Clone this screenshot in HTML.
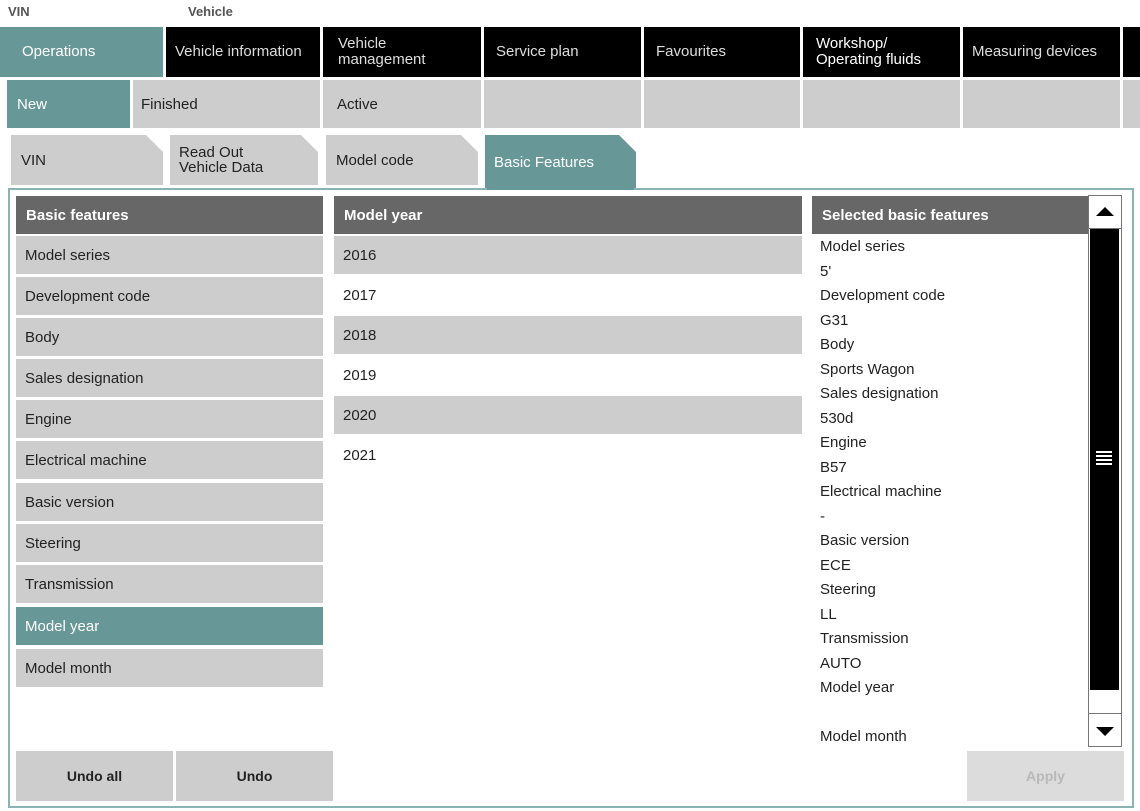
<!DOCTYPE html>
<html><head><style>
*{margin:0;padding:0;box-sizing:border-box}
body{width:1140px;height:811px;background:#fff;font-family:"Liberation Sans",Arial,sans-serif;font-size:15px;color:#222;position:relative;overflow:hidden}
.a{position:absolute}
.lbl{font-weight:bold;font-size:13px;color:#555}
.nav{background:#000;color:#ddd;display:flex;align-items:center;padding-left:9px;line-height:16px}
.sub{background:#cdcdcd;color:#222;display:flex;align-items:center;padding-left:10px}
.teal{background:#679797;color:#fff}
.tab{background:#cdcdcd;display:flex;align-items:center;padding-left:10px;line-height:15px;clip-path:polygon(0 0,calc(100% - 17px) 0,100% 17px,100% 100%,0 100%)}
.tab.teal{background:#679797;color:#fff}
.hd{background:#676767;color:#fff;font-weight:bold;display:flex;align-items:center;padding-left:10px}
.row{display:flex;align-items:center;padding-left:9px}
.g{background:#cdcdcd}
.sel{position:absolute;left:820px;line-height:24.5px}
.btn{background:#cdcdcd;font-weight:bold;font-size:14px;display:flex;align-items:center;justify-content:center}
</style></head><body>
<div class="a lbl" style="left:8px;top:4px">VIN</div>
<div class="a lbl" style="left:188px;top:4px">Vehicle</div>

<div class="a nav teal" style="left:0;top:27px;width:163px;height:50px;padding-left:22px;color:#fff">Operations</div>
<div class="a nav" style="left:166px;top:27px;width:154px;height:50px">Vehicle information</div>
<div class="a nav" style="left:323px;top:27px;width:158px;height:50px;padding-left:15px">Vehicle<br>management</div>
<div class="a nav" style="left:484px;top:27px;width:157px;height:50px;padding-left:12px">Service plan</div>
<div class="a nav" style="left:644px;top:27px;width:156px;height:50px;padding-left:12px">Favourites</div>
<div class="a nav" style="left:803px;top:27px;width:157px;height:50px;padding-left:13px;color:#fff">Workshop/<br>Operating fluids</div>
<div class="a nav" style="left:963px;top:27px;width:157px;height:50px;padding-left:9px">Measuring devices</div>
<div class="a nav" style="left:1123px;top:27px;width:17px;height:50px"></div>

<div class="a sub teal" style="left:7px;top:80px;width:123px;height:48px;color:#fff">New</div>
<div class="a sub" style="left:133px;top:80px;width:187px;height:48px;padding-left:8px">Finished</div>
<div class="a sub" style="left:323px;top:80px;width:158px;height:48px;padding-left:14px">Active</div>
<div class="a sub" style="left:484px;top:80px;width:157px;height:48px"></div>
<div class="a sub" style="left:644px;top:80px;width:156px;height:48px"></div>
<div class="a sub" style="left:803px;top:80px;width:157px;height:48px"></div>
<div class="a sub" style="left:963px;top:80px;width:157px;height:48px"></div>
<div class="a sub" style="left:1123px;top:80px;width:17px;height:48px"></div>

<div class="a tab" style="left:11px;top:135px;width:152px;height:50px">VIN</div>
<div class="a tab" style="left:170px;top:135px;width:148px;height:50px;padding-left:9px">Read Out<br>Vehicle Data</div>
<div class="a tab" style="left:326px;top:135px;width:152px;height:50px;padding-left:10px">Model code</div>
<div class="a tab teal" style="left:485px;top:135px;width:151px;height:54px;padding-left:9px">Basic Features</div>

<div class="a" style="left:8px;top:188px;width:1126px;height:620px;border:2px solid #8ab3b3"></div>
<div class="a" style="left:487px;top:188px;width:147px;height:2px;background:#679797"></div>

<div class="a hd" style="left:16px;top:196px;width:307px;height:38px">Basic features</div>
<div class="a row g" style="left:16px;top:236px;width:307px;height:38px">Model series</div>
<div class="a row g" style="left:16px;top:277px;width:307px;height:38px">Development code</div>
<div class="a row g" style="left:16px;top:318px;width:307px;height:38px">Body</div>
<div class="a row g" style="left:16px;top:359px;width:307px;height:38px">Sales designation</div>
<div class="a row g" style="left:16px;top:400px;width:307px;height:38px">Engine</div>
<div class="a row g" style="left:16px;top:441px;width:307px;height:38px">Electrical machine</div>
<div class="a row g" style="left:16px;top:483px;width:307px;height:38px">Basic version</div>
<div class="a row g" style="left:16px;top:524px;width:307px;height:38px">Steering</div>
<div class="a row g" style="left:16px;top:565px;width:307px;height:38px">Transmission</div>
<div class="a row teal" style="left:16px;top:607px;width:307px;height:38px">Model year</div>
<div class="a row g" style="left:16px;top:649px;width:307px;height:38px">Model month</div>

<div class="a hd" style="left:334px;top:196px;width:468px;height:38px">Model year</div>
<div class="a row g" style="left:334px;top:236px;width:468px;height:38px">2016</div>
<div class="a row" style="left:334px;top:276px;width:468px;height:38px">2017</div>
<div class="a row g" style="left:334px;top:316px;width:468px;height:38px">2018</div>
<div class="a row" style="left:334px;top:356px;width:468px;height:38px">2019</div>
<div class="a row g" style="left:334px;top:396px;width:468px;height:38px">2020</div>
<div class="a row" style="left:334px;top:436px;width:468px;height:38px">2021</div>

<div class="a hd" style="left:812px;top:196px;width:276px;height:38px">Selected basic features</div>
<div class="sel" style="top:235px">Model series<br>5'<br>Development code<br>G31<br>Body<br>Sports Wagon<br>Sales designation<br>530d<br>Engine<br>B57<br>Electrical machine<br>-<br>Basic version<br>ECE<br>Steering<br>LL<br>Transmission<br>AUTO<br>Model year<br><br>Model month</div>

<div class="a" style="left:1088px;top:195px;width:34px;height:552px;border:1px solid #777;background:#fff"></div>
<div class="a" style="left:1089px;top:228px;width:32px;height:1px;background:#777"></div>
<div class="a" style="left:1090px;top:229px;width:29px;height:461px;background:#000"></div>
<div class="a" style="left:1089px;top:713px;width:32px;height:1px;background:#777"></div>
<svg class="a" style="left:1094px;top:204px" width="22" height="14"><polygon points="2,12 11,3 20,12" fill="#000"/></svg>
<svg class="a" style="left:1094px;top:724px" width="22" height="14"><polygon points="2,3 11,12 20,3" fill="#000"/></svg>
<div class="a" style="left:1096px;top:451px;width:16px;height:2px;background:#fff;box-shadow:0 4px 0 #fff,0 8px 0 #fff,0 12px 0 #fff"></div>

<div class="a btn" style="left:16px;top:751px;width:157px;height:50px">Undo all</div>
<div class="a btn" style="left:176px;top:751px;width:157px;height:50px">Undo</div>
<div class="a btn" style="left:967px;top:751px;width:157px;height:50px;background:#dcdcdc;color:#b8b8b8">Apply</div>
</body></html>
